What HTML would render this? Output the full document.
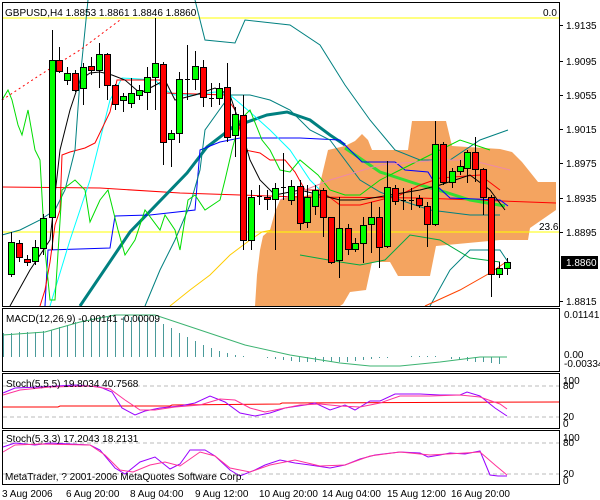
<!DOCTYPE html>
<html><head><meta charset="utf-8"><style>
html,body{margin:0;padding:0;background:#fff;width:600px;height:500px;overflow:hidden}
svg{display:block}
text{font-family:"Liberation Sans",sans-serif;font-size:10px;fill:#000}
</style></head><body>
<svg id="s" width="600" height="500" xmlns="http://www.w3.org/2000/svg">
<rect width="600" height="500" fill="#fff"/>
<!-- cloud -->
<polygon fill="#f4a460" points="255,306 257,275 260,250 263,236 270,230 275,212 280,200 292,196 305,196 318,192 328,150 345,146 355,141 362,134 368,140 372,150 408,150 412,121 446,121 452,146 500,149 512,152 522,162 530,172 538,182 556,182 556,210 530,228 528,240 500,240 436,246 430,276 398,276 390,262 372,262 366,290 350,292 343,304 340,306"/>
<g fill="none" stroke-width="1">
<polyline stroke="#ffff00" points="2,18 560,18"/>
<polyline stroke="#ffff00" points="2,232 560,232"/>
<polyline stroke="#ff0000" points="2,187 100,188 180,193 300,197 420,198 556,203"/>
<polyline stroke="#008080" stroke-width="3" points="80,306 130,232 187,173 207,147 233,127 267,115 287,112 310,120 330,135 345,145"/>
<polyline stroke="#33dd33" stroke-width="3" points="345,148 380,172 420,185 445,192 470,200 505,206"/>
<polyline stroke="#0000ff" points="45,306 48,250 110,248 115,216 150,215 195,210 200,150 220,142 240,138 300,138 340,140 362,162 395,162 405,170 428,172 436,185 450,198 500,200 508,206"/>
<polyline stroke="#00ffff" points="50,306 70,240 90,180 110,100 122,78 155,80 165,90 175,95 195,95 215,92 230,95 250,112 270,130 290,150 310,180 320,190"/>
<polyline stroke="#ff0000" points="40,306 45,290 50,262 55,225 60,210 62,155 70,152 85,148 95,143 110,112 117,80 160,80 165,93 225,95 235,110 245,150 260,153 270,160 285,160 295,172 305,190 320,190 340,205 360,205 380,200 400,195 420,185 440,178 480,175 500,190"/>
<polyline stroke="#000" points="10,306 30,270 50,240 60,150 70,110 80,80 90,73 100,72 112,75 125,80 140,93 150,88 165,80 175,100 195,95 215,88 230,95 240,125 250,160 260,180 275,195 290,192 300,190 320,195 340,200 360,200 390,195 420,190 440,185 470,175 490,190 505,210"/>
<polyline stroke="#008080" points="2,235 20,230 40,220 55,210 65,190 75,150 80,80 85,30 88,0"/>
<polyline stroke="#008080" points="195,0 205,40 235,43 245,20 290,25 320,45 345,85 370,120 395,150 420,160 450,160 480,140 508,130"/>
<polyline stroke="#008080" points="145,306 160,270 175,240 190,205 200,170 205,130 230,95 250,95 270,100 290,110 310,130 330,140 360,180 380,192 400,200 430,210 470,215 500,215"/>
<polyline stroke="#008080" points="430,306 450,270 470,250 500,250 510,265"/>
<polyline stroke="#00aa44" points="300,255 340,262 360,265 385,260 410,235 440,240 470,258 500,262"/>
<polyline stroke="#00dd00" points="2,100 8,90 12,100 18,125 22,135 28,110 35,150 40,160 45,250 50,300 55,300 62,190 75,180 85,190 90,222 100,200 108,190 118,230 125,255 135,240 145,210 160,230 165,215 175,230 180,250 188,200 195,195 205,210 220,200 225,180 232,150 240,120 250,110 262,140 270,150 280,170 290,172 300,160 318,175 330,190 345,195 360,195 380,180 400,170 430,155 460,140 490,150"/>
<polyline stroke="#ffcc00" points="170,306 190,290 210,275 230,255 250,240 262,232 272,230"/>
<polyline stroke="#ff4400" points="425,306 460,290 490,273 506,262"/>
<polyline stroke="#ff0000" stroke-dasharray="2,3" points="2,100 40,75 80,50 120,20"/>
<polyline stroke="#ee88aa" points="280,200 330,180 380,165 440,160 470,160 510,170"/>
</g>
<g id="c"></g>
<!-- frames -->
<g fill="none" stroke="#000">
<rect x="2.5" y="2.5" width="557" height="304"/>
<rect x="2.5" y="308.5" width="557" height="63"/>
<rect x="2.5" y="373.5" width="557" height="55"/>
<rect x="2.5" y="430.5" width="557" height="54"/>
</g>
<!-- MACD -->
<g id="m" stroke="#4a9a9a"></g>
<polyline fill="none" stroke="#3cb371" points="3,335 45,332 80,322 115,315 155,315 200,330 245,345 290,355 340,363 370,366 400,366 440,362 480,357 507,357"/>
<!-- stoch -->
<g fill="none">
<line x1="3" y1="386" x2="559" y2="386" stroke="#bbb" stroke-dasharray="4,3"/>
<line x1="3" y1="417" x2="559" y2="417" stroke="#bbb" stroke-dasharray="4,3"/>
<polyline stroke="#ff0000" points="3,407 58,407 60,406 170,406 172,405 280,404 282,403 559,402"/>
<polyline stroke="#9900ff" points="3,393 15,388 40,387 75,385 100,387 112,392 122,408 135,415 145,411 160,408 180,406 195,403 210,396 225,402 240,413 255,416 270,413 285,408 305,405 315,403 330,410 345,405 355,410 370,401 380,401 395,394 420,394 440,395 460,395 467,392 480,396 495,408 507,416"/>
<polyline stroke="#ff3399" points="3,395 20,390 50,387 90,386 110,389 125,400 140,410 155,410 175,407 200,405 220,399 235,400 250,408 265,412 280,409 300,405 320,404 340,406 360,407 380,403 400,396 430,396 460,395 480,397 500,404 507,409"/>
<line x1="3" y1="443" x2="559" y2="443" stroke="#bbb" stroke-dasharray="4,3"/>
<line x1="3" y1="474" x2="559" y2="474" stroke="#bbb" stroke-dasharray="4,3"/>
<polyline stroke="#9900ff" points="3,447 15,443 35,445 50,443 90,445 100,450 115,468 125,474 140,462 155,457 170,469 180,464 190,450 205,450 215,456 230,470 240,476 255,470 265,465 280,460 295,463 310,465 330,468 345,465 360,459 375,455 400,452 420,453 428,457 440,455 450,453 465,454 480,451 490,475 498,476 507,476"/>
<polyline stroke="#ff3399" points="3,452 15,445 40,444 90,445 105,455 120,470 133,472 150,465 165,462 180,466 200,452 215,456 230,468 250,472 270,465 295,460 320,466 345,465 370,456 400,452 430,455 465,453 480,452 495,465 507,475"/>
</g>
<!-- labels -->
<text x="5" y="16">GBPUSD,H4  1.8853 1.8861 1.8846 1.8860</text>
<text x="543" y="16">0.0</text>
<text x="539" y="230">23.6</text>
<text x="6" y="322">MACD(12,26,9) -0.00141 -0.00009</text>
<text x="6" y="387">Stoch(5,5,5) 19.8034 40.7568</text>
<text x="6" y="442">Stoch(5,3,3) 17.2043 18.2131</text>
<text x="5" y="480">MetaTrader, ? 2001-2006 MetaQuotes Software Corp.</text>
<g id="ax"></g>
<rect x="561" y="256" width="37" height="13" fill="#000"/>
<text x="566" y="266" style="fill:#fff">1.8860</text>
<text x="564" y="318">0.01141</text>
<text x="564" y="358">0.00</text>
<text x="564" y="367">-0.00334</text>
<text x="563" y="384">100</text><text x="563" y="389">80</text><text x="563" y="420">20</text><text x="563" y="427">0</text>
<text x="563" y="441">100</text><text x="563" y="446">80</text><text x="563" y="477">20</text><text x="563" y="484">0</text>
<g>
<text x="2" y="497">3 Aug 2006</text>
<text x="66" y="497">6 Aug 20:00</text>
<text x="130" y="497">8 Aug 04:00</text>
<text x="195" y="497">9 Aug 12:00</text>
<text x="259" y="497">10 Aug 20:00</text>
<text x="322" y="497">14 Aug 04:00</text>
<text x="387" y="497">15 Aug 12:00</text>
<text x="451" y="497">16 Aug 20:00</text>
</g>
</svg>
<script>
var NS="http://www.w3.org/2000/svg";
function el(p,t,a){var e=document.createElementNS(NS,t);for(var k in a)e.setAttribute(k,a[k]);p.appendChild(e);return e;}
var C=[[11,242,274,232,277,'g'],[19,243,257,240,262,'r'],[27,259,262,255,266,'r'],[35,247,261,240,265,'g'],[43,218,248,214,255,'g'],
[52,60,217,30,250,'g'],[59,60,71,47,73,'r'],[67,73,80,67,85,'g'],[75,73,90,70,92,'r'],[83,67,88,63,105,'g'],[91,66,70,57,75,'r'],[99,54,70,43,88,'g'],[107,54,85,53,100,'r'],[115,85,104,84,110,'r'],[123,96,100,93,112,'g'],[131,93,103,78,108,'g'],[139,90,95,85,100,'g'],[147,77,92,67,110,'g'],[155,63,77,18,110,'g'],[163,64,142,62,165,'r'],[171,133,139,130,167,'g'],[179,79,133,72,143,'g'],[187,79,79,45,100,'k'],[195,66,79,51,90,'g'],[203,67,97,60,107,'r'],[211,98,98,83,107,'k'],[219,88,98,83,105,'g'],[227,87,137,63,142,'r'],[235,114,135,107,157,'g'],[243,115,240,95,250,'r'],[251,197,240,190,250,'g'],[259,196,196,185,205,'k'],[267,197,199,190,210,'r'],[275,188,199,183,250,'g'],[283,187,187,153,200,'k'],[291,186,200,180,205,'g'],
[300,186,223,180,230,'r'],[307,197,222,185,228,'g'],[315,190,206,185,215,'g'],[323,190,217,188,237,'r'],[331,217,262,217,264,'r'],[339,228,260,197,278,'g'],[348,228,249,224,255,'r'],[355,243,249,238,252,'g'],[363,225,243,217,263,'g'],[371,217,224,202,253,'g'],[379,217,247,207,268,'r'],[387,187,246,161,248,'g'],[395,188,201,185,205,'r'],[403,200,200,188,210,'k'],[411,200,200,188,210,'k'],[419,198,205,195,208,'r'],[427,206,224,202,247,'r'],[435,144,224,121,226,'g'],[443,144,182,142,185,'r'],[452,171,182,168,188,'g'],[460,166,171,160,175,'g'],[467,152,168,150,183,'g'],[475,152,169,137,182,'r'],[483,169,197,168,215,'r'],[491,197,274,195,297,'r'],[499,268,274,262,278,'g'],[507,262,268,258,275,'g']];
var g=document.getElementById('c');
C.forEach(function(c){var x=c[0];
el(g,'line',{x1:x+.5,y1:c[3],x2:x+.5,y2:c[4],stroke:'#000'});
if(c[5]=='k'){el(g,'line',{x1:x-2,y1:c[1]+.5,x2:x+3,y2:c[1]+.5,stroke:'#000'});return;}
el(g,'rect',{x:x-2.5,y:c[1]+.5,width:6,height:Math.max(c[2]-c[1],2),fill:c[5]=='g'?'#00ff00':'#ff0000',stroke:'#000'});});
var m=document.getElementById('m');
var H=[333,333,332,332,332,331,330,327,325,322,320,318,317,317,317,317,317,317,318,320,324,328,333,337,341,345,348,351,353,355,356,357,357,358,359,360,361,362,362,362,362,362,362,362,361,360,359,358,358,357,357,356,356,356,356,357,359,360,361,362,362,363,364];
for(var i=0;i<H.length;i++){var x=3+i*8+.5;el(m,'line',{x1:x,y1:357,x2:x,y2:H[i]});}
var ax=document.getElementById('ax');
[[25,'1.9135'],[61,'1.9095'],[95,'1.9055'],[129,'1.9015'],[163,'1.8975'],[198,'1.8935'],[232,'1.8895'],[301,'1.8815']].forEach(function(a){
el(ax,'line',{x1:560,y1:a[0]+.5,x2:563,y2:a[0]+.5,stroke:'#000'});var t=el(ax,'text',{x:566,y:a[0]+4});t.textContent=a[1];});
</script>
</body></html>
